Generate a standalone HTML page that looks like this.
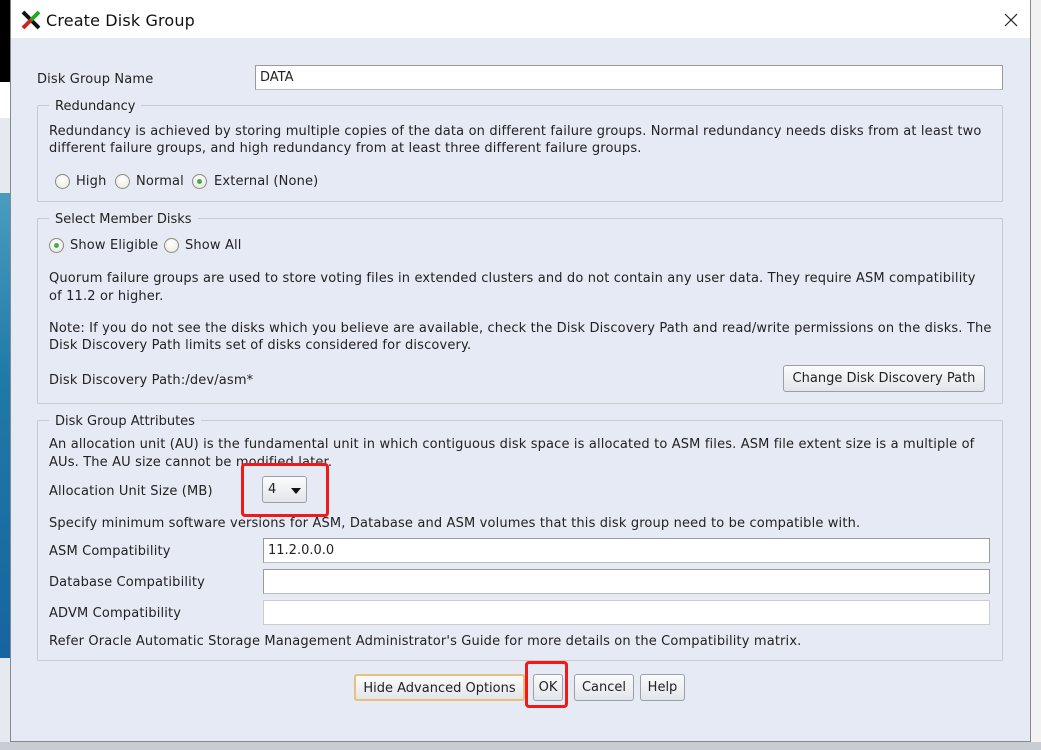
<!DOCTYPE html>
<html><head><meta charset="utf-8"><style>
*{margin:0;padding:0;box-sizing:border-box}
body{width:1041px;height:750px;position:relative;overflow:hidden;background:#fff;font-family:"DejaVu Sans","Liberation Sans",sans-serif;font-size:13px;color:#222}
.a{position:absolute;white-space:nowrap;line-height:16px;letter-spacing:0.15px;margin-top:2px}
.dlg{position:absolute;left:10px;top:0;width:1021px;height:742px;background:#e6eaf5;border:1px solid #888;border-top:none}
.tb{position:absolute;left:0;top:0;width:100%;height:38px;background:#fff}
.fs{position:absolute;border:1px solid #c8cacc;border-radius:2px}
.lg{position:absolute;background:#e6eaf5;padding:0 6px;line-height:16px;margin-top:2px}
.in{position:absolute;background:#fff;border:1px solid #9a9a9a;border-bottom-color:#bbb;padding-left:4px;line-height:24px}
.btn{position:absolute;border:1px solid #9a9fa8;border-radius:3px;background:linear-gradient(#fbfbfc,#e2e5ea);text-align:center;line-height:26px}
.rd{position:absolute;width:15px;height:15px;border-radius:50%;border:1px solid #8a8a80;background:radial-gradient(circle at 50% 35%,#fff,#e8e6dc);margin-top:2px}
.rd.on::after{content:"";position:absolute;left:4px;top:4px;width:5px;height:5px;border-radius:50%;background:#3bb34a}
.red{position:absolute;border:3px solid #f01a1a;border-radius:4px}
</style></head><body>
<div style="position:absolute;left:0;top:0;width:10px;height:82px;background:#000"></div>
<div style="position:absolute;left:0;top:82px;width:10px;height:36px;background:#fff"></div>
<div style="position:absolute;left:0;top:118px;width:10px;height:75px;background:#e6eaf0"></div>
<div style="position:absolute;left:0;top:193px;width:10px;height:465px;background:linear-gradient(#4a9cc0,#1f7aa8 40%,#1764a0)"></div>
<div style="position:absolute;left:0;top:658px;width:10px;height:92px;background:#e6eaf0"></div>
<div style="position:absolute;left:1031px;top:0;width:10px;height:750px;background:#f2f2f2"></div>
<div style="position:absolute;left:0;top:742px;width:1041px;height:8px;background:#c9ccd2"></div>
<div class="dlg">
<div class="tb">
<svg style="position:absolute;left:10px;top:10px" width="20" height="20" viewBox="0 0 20 20"><path d="M2 2 L18 18" stroke="#111" stroke-width="4"/><path d="M18 2 L10 10" stroke="#2a2" stroke-width="4"/><path d="M10 10 L2 18" stroke="#c22" stroke-width="4"/></svg>
<div class="a" style="left:35px;top:10px;font-size:16px;line-height:18px;color:#111">Create Disk Group</div>
<svg style="position:absolute;left:993px;top:13px" width="14" height="14"><path d="M1 1L13 13M13 1L1 13" stroke="#222" stroke-width="1.2"/></svg>
</div>
</div>
<div class="a" style="left:37px;top:70px">Disk Group Name</div>
<div class="in" style="left:255px;top:65px;width:748px;height:25px">DATA</div>

<div class="fs" style="left:37px;top:105px;width:966px;height:97px"></div>
<div class="lg" style="left:49px;top:97px">Redundancy</div>
<div class="a" style="left:49px;top:122px">Redundancy is achieved by storing multiple copies of the data on different failure groups. Normal redundancy needs disks from at least two</div>
<div class="a" style="left:49px;top:139px">different failure groups, and high redundancy from at least three different failure groups.</div>
<div class="rd" style="left:55px;top:172px"></div><div class="a" style="left:76px;top:172px">High</div>
<div class="rd" style="left:115px;top:172px"></div><div class="a" style="left:136px;top:172px">Normal</div>
<div class="rd on" style="left:192px;top:172px"></div><div class="a" style="left:214px;top:172px">External (None)</div>

<div class="fs" style="left:37px;top:218px;width:966px;height:186px"></div>
<div class="lg" style="left:49px;top:210px">Select Member Disks</div>
<div class="rd on" style="left:49px;top:236px"></div><div class="a" style="left:70px;top:236px">Show Eligible</div>
<div class="rd" style="left:164px;top:236px"></div><div class="a" style="left:185px;top:236px">Show All</div>
<div class="a" style="left:49px;top:269px">Quorum failure groups are used to store voting files in extended clusters and do not contain any user data. They require ASM compatibility</div>
<div class="a" style="left:49px;top:287px">of 11.2 or higher.</div>
<div class="a" style="left:49px;top:319px">Note: If you do not see the disks which you believe are available, check the Disk Discovery Path and read/write permissions on the disks. The</div>
<div class="a" style="left:49px;top:336px">Disk Discovery Path limits set of disks considered for discovery.</div>
<div class="a" style="left:49px;top:371px">Disk Discovery Path:/dev/asm*</div>
<div class="btn" style="left:783px;top:365px;width:202px;height:27px">Change Disk Discovery Path</div>

<div class="fs" style="left:37px;top:420px;width:966px;height:241px"></div>
<div class="lg" style="left:49px;top:412px">Disk Group Attributes</div>
<div class="a" style="left:49px;top:435px">An allocation unit (AU) is the fundamental unit in which contiguous disk space is allocated to ASM files. ASM file extent size is a multiple of</div>
<div class="a" style="left:49px;top:453px">AUs. The AU size cannot be modified later.</div>
<div class="a" style="left:49px;top:482px">Allocation Unit Size (MB)</div>
<div class="btn" style="left:262px;top:476px;width:45px;height:27px;text-align:left;padding-left:5px">4<span style="position:absolute;left:28px;top:11px;border-left:5px solid transparent;border-right:5px solid transparent;border-top:6px solid #111"></span></div>
<div class="red" style="left:241px;top:463px;width:88px;height:54px"></div>
<div class="a" style="left:49px;top:514px">Specify minimum software versions for ASM, Database and ASM volumes that this disk group need to be compatible with.</div>
<div class="a" style="left:49px;top:542px">ASM Compatibility</div>
<div class="in" style="left:263px;top:538px;width:727px;height:25px">11.2.0.0.0</div>
<div class="a" style="left:49px;top:573px">Database Compatibility</div>
<div class="in" style="left:263px;top:569px;width:727px;height:25px"></div>
<div class="a" style="left:49px;top:604px">ADVM Compatibility</div>
<div class="in" style="left:263px;top:600px;width:727px;height:25px;border-color:#ccc"></div>
<div class="a" style="left:49px;top:632px">Refer Oracle Automatic Storage Management Administrator's Guide for more details on the Compatibility matrix.</div>

<div class="btn" style="left:354px;top:674px;width:171px;height:27px;border:2px solid #e8c07a">Hide Advanced Options</div>
<div class="btn" style="left:533px;top:674px;width:30px;height:27px">OK</div>
<div class="btn" style="left:574px;top:674px;width:60px;height:27px">Cancel</div>
<div class="btn" style="left:640px;top:674px;width:45px;height:27px">Help</div>
<div class="red" style="left:525px;top:661px;width:43px;height:47px"></div>
</body></html>
